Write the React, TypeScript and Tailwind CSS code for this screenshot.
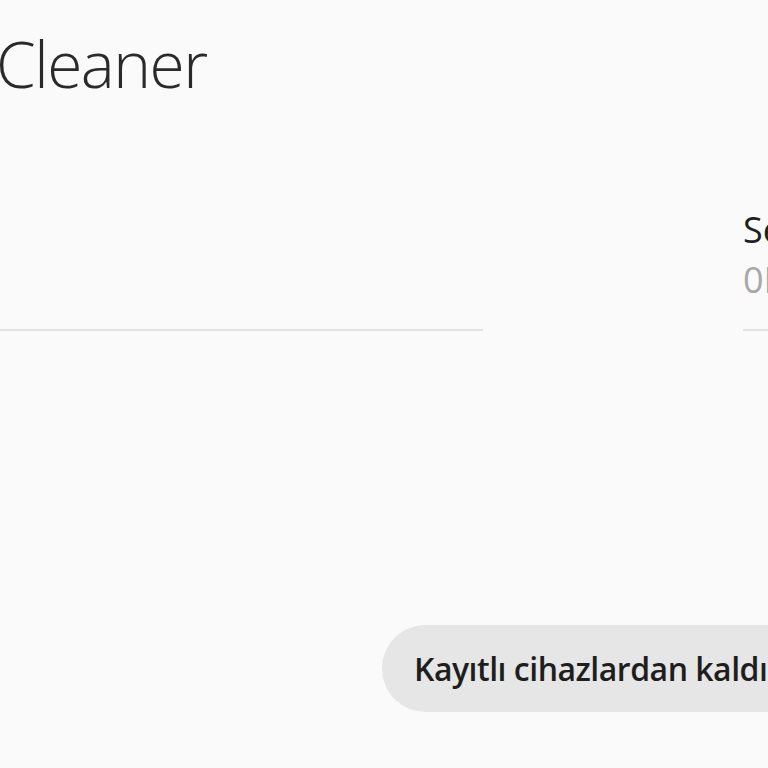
export default function App() {
  return (
    <div className="h-[768px] w-[768px] overflow-hidden bg-[#fafafa] font-['Open_Sans',sans-serif] text-[#1f1f1f]">
      <h1 className="-ml-[4px] pt-[20px] text-[64px] font-light leading-[88px] tracking-[-1.5px] text-[#2a2a2a]">Cleaner</h1>

      <div className="mt-[94px] flex gap-[260px]">
        <div className="h-[129px] w-[483px] shrink-0 border-b-2 border-[#e4e4e4]" />
        <div className="h-[129px] w-[300px] shrink-0 whitespace-nowrap border-b-2 border-[#e4e4e4] pt-[3px]">
          <div className="text-[36px] leading-[50px]">Seri numarası</div>
          <div className="text-[36px] leading-[50px] text-[#a8a8a8]">0IN7K2</div>
        </div>
      </div>

      <div className="mt-[294px] flex pl-[382px]">
        <button
          type="button"
          className="h-[87px] shrink-0 whitespace-nowrap rounded-full bg-[#e6e6e6] pr-[40px] pl-[32px] text-[32px] font-semibold tracking-[-0.5px] text-[#1e1e1e]"
        >
          Kayıtlı cihazlardan kaldır
        </button>
      </div>
    </div>
  )
}
